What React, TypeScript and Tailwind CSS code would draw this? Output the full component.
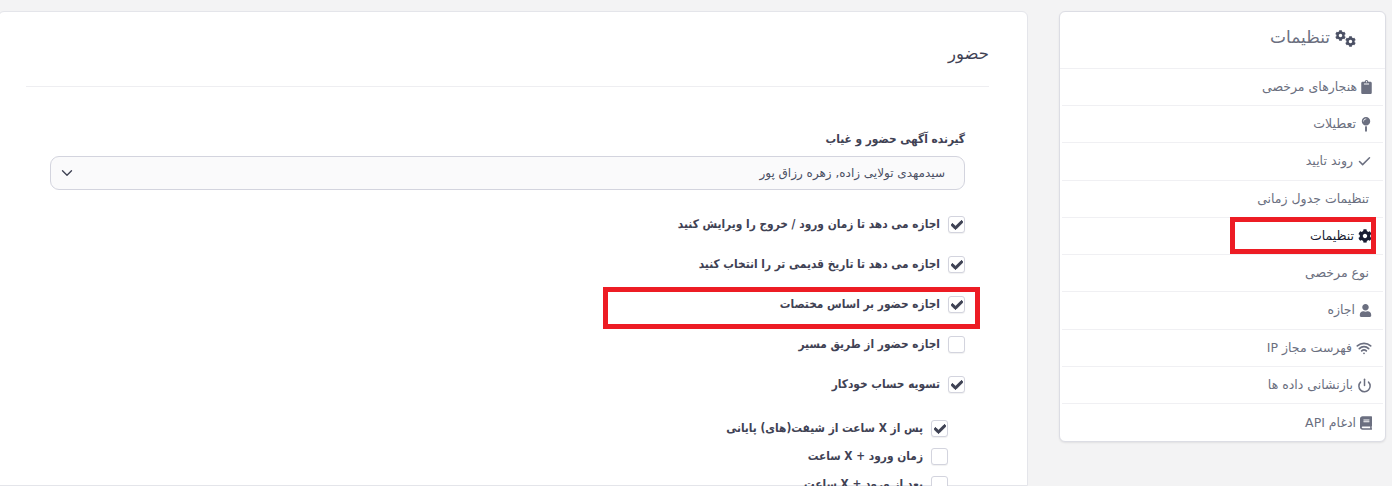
import { Check, ChevronDown, Power, Wifi } from "lucide-react";
import { FaBook, FaCheck, FaClipboard, FaCog, FaMapPin, FaUser } from "react-icons/fa";
import type { ReactNode } from "react";

const menu: { label: string; icon?: ReactNode; active?: boolean; h: string }[] = [
  { label: "هنجارهای مرخصی", icon: <FaClipboard className="w-[11px] h-[14px]" />, h: "h-[37px]" },
  { label: "تعطیلات", icon: <FaMapPin className="w-[12px] h-[15px]" />, h: "h-[37px]" },
  { label: "روند تایید", icon: <Check className="w-[15px] h-[15px]" strokeWidth={2.4} />, h: "h-[38px]" },
  { label: "تنظیمات جدول زمانی", h: "h-[37px]" },
  { label: "تنظیمات", icon: <FaCog className="w-[14px] h-[14px]" />, active: true, h: "h-[37px]" },
  { label: "نوع مرخصی", h: "h-[37px]" },
  { label: "اجازه", icon: <FaUser className="w-[13px] h-[13px]" />, h: "h-[38px]" },
  { label: "فهرست مجاز IP", icon: <Wifi className="w-[16px] h-[16px]" strokeWidth={2.6} />, h: "h-[37px]" },
  { label: "بازنشانی داده ها", icon: <Power className="w-[15px] h-[15px]" strokeWidth={2.4} />, h: "h-[37px]" },
  { label: "ادغام API", icon: <FaBook className="w-[12px] h-[14px]" />, h: "h-[38px]" },
];

function Box({ checked }: { checked?: boolean }) {
  return (
    <span className="w-[17px] h-[17px] shrink-0 rounded-[3px] border border-[#d3d4de] bg-white shadow-[0_1px_1px_rgba(0,0,0,0.06)] flex items-center justify-center text-[#3f4254]">
      {checked && <FaCheck className="w-[12px] h-[12px] stroke-current stroke-[40]" />}
    </span>
  );
}

function Row({ label, checked, className }: { label: string; checked?: boolean; className: string }) {
  return (
    <div className={`flex items-center gap-[8px] ${className}`}>
      <Box checked={checked} />
      <span className="text-[11.8px] font-bold font-['DejaVu_Sans_Condensed','DejaVu_Sans',sans-serif] text-[#3f4254] leading-[17px]">{label}</span>
    </div>
  );
}

export default function App() {
  return (
    <div
      dir="rtl"
      className="h-[486px] w-[1392px] overflow-hidden bg-[#f3f3f4] flex gap-[31px] pt-[11px] pr-[6px] font-['DejaVu_Sans','Noto_Sans',sans-serif] relative"
    >
      {/* Sidebar */}
      <aside className="w-[327px] h-[431px] shrink-0 bg-white rounded-[6px] border border-[#dcdde4] shadow-[0_1px_2px_rgba(0,0,0,0.08)]">
        <div className="h-[57px] flex items-center gap-[5px] pr-[29px] pb-[4px] text-[#6b6f80] border-b border-[#f0f0f3]">
          <span dir="ltr" className="flex h-[17px] text-[#4b5064]">
            <FaCog className="w-[11px] h-[11px]" />
            <FaCog className="w-[11px] h-[11px] self-end -ml-[1px]" />
          </span>
          <span className="text-[17px]">تنظیمات</span>
        </div>
        {menu.map((m) => (
          <div
            key={m.label}
            className={`${m.h} flex items-center gap-[4px] pr-[11px] mx-[2px] border-b border-[#f0f0f3] last:border-b-0 text-[12.5px] ${m.active ? "text-[#181c32]" : "text-[#6b6f80]"}`}
          >
            {m.icon}
            <span className={m.icon ? "" : "pr-[3px]"}>{m.label}</span>
          </div>
        ))}
      </aside>

      {/* Main card */}
      <main className="flex-1 min-w-0 -ml-[2px] bg-white rounded-tl-[6px] rounded-tr-[6px] border border-[#e4e5ea] pr-[38px] pl-[27px]">
        <h1 className="h-[75px] flex items-center pt-[10px] border-b border-[#eeeef1] text-[16.5px] font-normal text-[#3f4254]">حضور</h1>
        <div className="pr-[24px] pl-[24px]">
          <label className="block mt-[43px] text-[11.8px] font-bold font-['DejaVu_Sans_Condensed','DejaVu_Sans',sans-serif] text-[#3f4254] leading-[18px]">گیرنده آگهی حضور و غیاب</label>
          <div className="mt-[8px] h-[34px] rounded-[9px] border border-[#d3d4de] bg-[#fafafb] flex items-center justify-between pr-[19px] pl-[7px] text-[12px] text-[#4b5064]">
            <span>سیدمهدی تولایی زاده, زهره رزاق پور</span>
            <ChevronDown className="w-[18px] h-[18px] text-[#3f4254]" strokeWidth={1.8} />
          </div>
          <Row className="mt-[26px]" checked label="اجازه می دهد تا زمان ورود / خروج را ویرایش کنید" />
          <Row className="mt-[23px]" checked label="اجازه می دهد تا تاریخ قدیمی تر را انتخاب کنید" />
          <Row className="mt-[23px]" checked label="اجازه حضور بر اساس مختصات" />
          <Row className="mt-[23px]" label="اجازه حضور از طریق مسیر" />
          <Row className="mt-[23px]" checked label="تسویه حساب خودکار" />
          <div className="pr-[17px]">
            <Row className="mt-[27px]" checked label="پس از X ساعت از شیفت(های) پایانی" />
            <Row className="mt-[11px]" label="زمان ورود + X ساعت" />
            <Row className="mt-[11px]" label="بعد از ورود + X ساعت" />
          </div>
        </div>
      </main>

      {/* Red annotation boxes drawn over the screenshot */}
      <div className="absolute left-[1230px] top-[217px] w-[146px] h-[37px] border-[5px] border-[#ed1c24]" />
      <div className="absolute left-[603px] top-[287px] w-[377px] h-[42px] border-[5px] border-[#ed1c24]" />
    </div>
  );
}
